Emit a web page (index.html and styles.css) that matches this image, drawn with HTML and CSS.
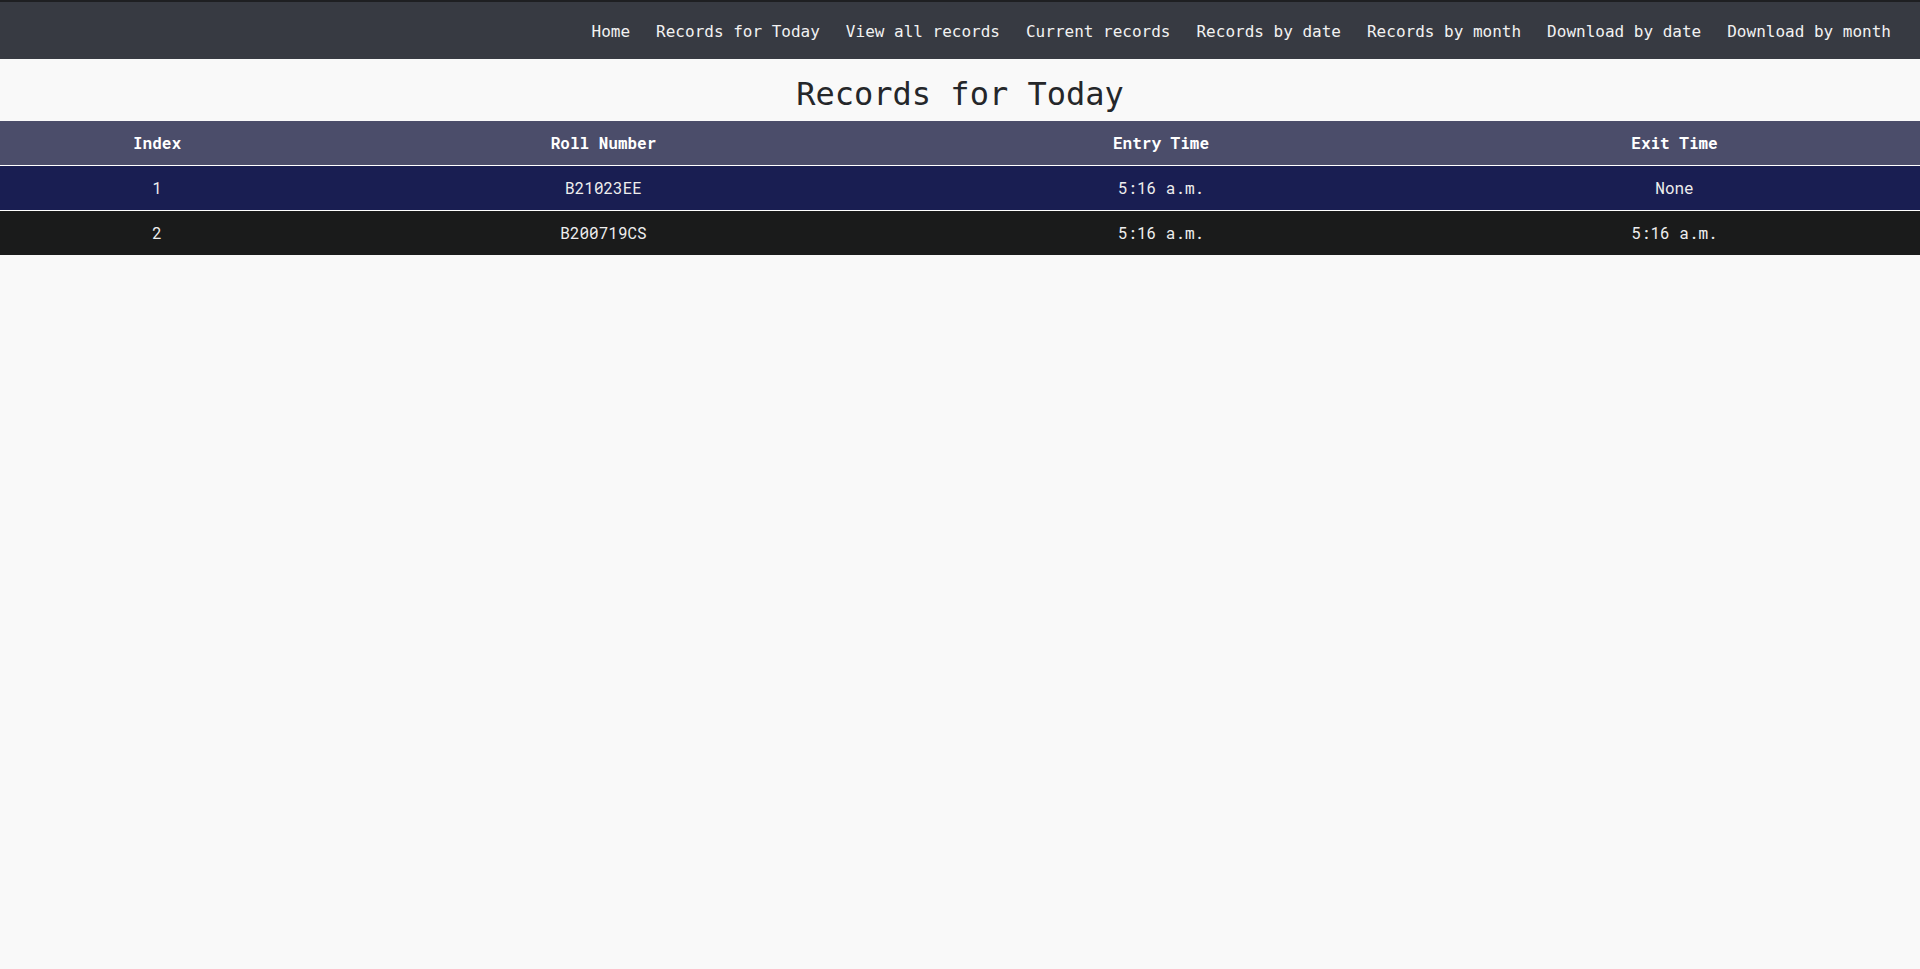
FILE: index.html
```html
<!DOCTYPE html>
<html lang="en">
<head>
<meta charset="utf-8">
<title>Records for Today</title>
<link rel="stylesheet" href="styles.css">
</head>
<body>
<nav class="navbar">
  <a class="nav-link" href="#">Home</a>
  <a class="nav-link" href="#">Records for Today</a>
  <a class="nav-link" href="#">View all records</a>
  <a class="nav-link" href="#">Current records</a>
  <a class="nav-link" href="#">Records by date</a>
  <a class="nav-link" href="#">Records by month</a>
  <a class="nav-link" href="#">Download by date</a>
  <a class="nav-link" href="#">Download by month</a>
</nav>
<main class="content">
  <h1 class="page-title">Records for Today</h1>
  <table class="records">
    <colgroup>
      <col class="col-index">
      <col class="col-roll">
      <col class="col-entry">
      <col class="col-exit">
    </colgroup>
    <thead>
      <tr class="head-row">
        <th>Index</th>
        <th>Roll Number</th>
        <th>Entry Time</th>
        <th>Exit Time</th>
      </tr>
    </thead>
    <tbody>
      <tr class="row-odd">
        <td>1</td>
        <td>B21023EE</td>
        <td>5:16 a.m.</td>
        <td>None</td>
      </tr>
      <tr class="row-even">
        <td>2</td>
        <td>B200719CS</td>
        <td>5:16 a.m.</td>
        <td>5:16 a.m.</td>
      </tr>
    </tbody>
  </table>
</main>
</body>
</html>
```

FILE: styles.css
```css
html, body {
  margin: 0;
  padding: 0;
  background: #f9f9f9;
}

body {
  font-family: "DejaVu Sans Mono", monospace;
  color: #222;
}

.navbar {
  box-sizing: border-box;
  height: 59px;
  border-top: 2px solid #1e1f22;
  background: #373a42;
  display: flex;
  justify-content: flex-end;
  align-items: center;
  padding: 2px 16px 0 0;
}

.nav-link {
  color: #f2f2f2;
  text-decoration: none;
  font-size: 16px;
  padding: 0 13px;
  line-height: 20px;
}

.page-title {
  font-family: "DejaVu Sans Mono", monospace;
  font-weight: normal;
  font-size: 32px;
  line-height: 37px;
  color: #25272a;
  text-align: center;
  margin: 17px 0 8px;
}

.records {
  width: 100%;
  border-collapse: collapse;
  table-layout: fixed;
  font-family: "Roboto Mono", "DejaVu Sans Mono", monospace;
}

.col-index { width: 314px; }
.col-roll { width: 579px; }
.col-entry { width: 536px; }
.col-exit { width: 491px; }

.records th,
.records td {
  height: 42px;
  padding: 0 0 2px;
  text-align: center;
  vertical-align: middle;
  font-size: 16px;
}

.records th {
  font-weight: bold;
  color: #ffffff;
}

.records td {
  color: #eeeeee;
}

.head-row {
  background: #4b4d6a;
}

.row-odd {
  background: #191e52;
  border-top: 1px solid #ffffff;
}

.row-even {
  background: #1a1b1b;
  border-top: 1px solid #ffffff;
}
```
